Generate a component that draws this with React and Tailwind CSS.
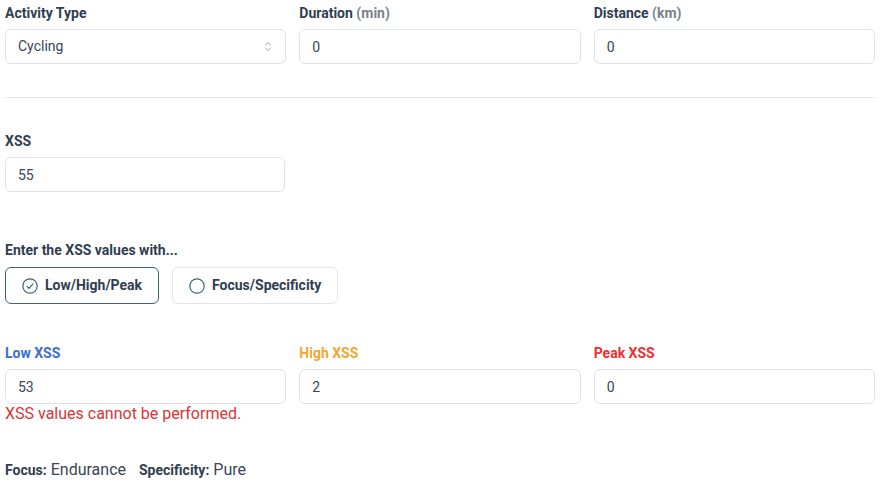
import { useState } from 'react'

const inputCls = 'w-full h-[35px] rounded-md border border-[#dde3e6] bg-white px-3 text-[14px] text-[#3a4556] outline-none'
const labelCls = 'block text-[14px] font-bold text-[#2f3e50] leading-5 mb-[6px]'

function Field({ label, unit, value, labelColor }) {
    return (
        <div className="flex-1">
            <label className={labelCls} style={labelColor ? { color: labelColor } : undefined}>
                {label} {unit && <span className="text-[#7b8189]">({unit})</span>}
            </label>
            <input className={inputCls} defaultValue={value} />
        </div>
    )
}

function CheckCircle() {
    return (
        <svg className="w-4 h-4" viewBox="0 0 16 16" fill="none" stroke="#3c6670" strokeWidth={1.2}>
            <circle cx="8" cy="8" r="7.2" />
            <path d="M5 8.3l2 2 4-4.4" strokeLinecap="round" strokeLinejoin="round" />
        </svg>
    )
}

function EmptyCircle() {
    return (
        <svg className="w-4 h-4" viewBox="0 0 16 16" fill="none" stroke="#3c6670" strokeWidth={1.2}>
            <circle cx="8" cy="8" r="7.2" />
        </svg>
    )
}

function ModeButton({ active, onClick, children }) {
    return (
        <button
            onClick={onClick}
            className={'h-[37px] flex items-center gap-[7px] px-[16px] rounded-md border bg-white text-[14px] font-bold text-[#2f3e50] ' + (active ? 'border-[#3c6670]' : 'border-[#e3e7e9]')}
        >
            {active ? <CheckCircle /> : <EmptyCircle />}
            {children}
        </button>
    )
}

export default function App() {
    const [mode, setMode] = useState('lhp')

    return (
        <div className="w-[870px] ml-[5px] pt-[3px] bg-white" style={{ fontFamily: 'Roboto, "Liberation Sans", sans-serif' }}>
            {/* Activity basics */}
            <div className="flex gap-[13px]">
                <div className="flex-1">
                    <label className={labelCls}>Activity Type</label>
                    <div className="relative">
                        <select className={inputCls + ' appearance-none'} defaultValue="Cycling">
                            <option>Cycling</option>
                            <option>Running</option>
                            <option>Swimming</option>
                        </select>
                        <svg className="absolute right-[14px] top-[12px] w-[8px] h-[11px]" viewBox="0 0 8 11" fill="none" stroke="#9aa3ab" strokeWidth={1}>
                            <path d="M1.5 4l2.5-2.5L6.5 4M1.5 7l2.5 2.5L6.5 7" strokeLinecap="round" strokeLinejoin="round" />
                        </svg>
                    </div>
                </div>
                <Field label="Duration" unit="min" value="0" />
                <Field label="Distance" unit="km" value="0" />
            </div>

            <hr className="mt-[33px] border-t border-[#dfe5e7]" />

            {/* Total XSS */}
            <div className="mt-[33px] w-[280px]">
                <label className={labelCls}>XSS</label>
                <input className={inputCls} defaultValue="55" />
            </div>

            {/* Entry mode */}
            <div className="mt-[48px]">
                <div className={labelCls + ' !mb-[7px]'}>Enter the XSS values with...</div>
                <div className="flex gap-[13px]">
                    <ModeButton active={mode === 'lhp'} onClick={() => setMode('lhp')}>Low/High/Peak</ModeButton>
                    <ModeButton active={mode === 'fs'} onClick={() => setMode('fs')}>Focus/Specificity</ModeButton>
                </div>
            </div>

            {/* Split values */}
            <div className="mt-[39px] flex gap-[13px]">
                <Field label="Low XSS" value="53" labelColor="#3b6dcc" />
                <Field label="High XSS" value="2" labelColor="#f2a531" />
                <Field label="Peak XSS" value="0" labelColor="#ef2f2f" />
            </div>
            <div className="text-[16px] leading-5 text-[#dc3434]">XSS values cannot be performed.</div>

            <div className="mt-[36px] flex items-baseline leading-5 text-[#3a4556]">
                <span className="text-[14px] font-bold text-[#2f3e50]">Focus:</span>
                <span className="ml-1 text-[16px]">Endurance</span>
                <span className="ml-[13px] text-[14px] font-bold text-[#2f3e50]">Specificity:</span>
                <span className="ml-1 text-[16px]">Pure</span>
            </div>
        </div>
    )
}
